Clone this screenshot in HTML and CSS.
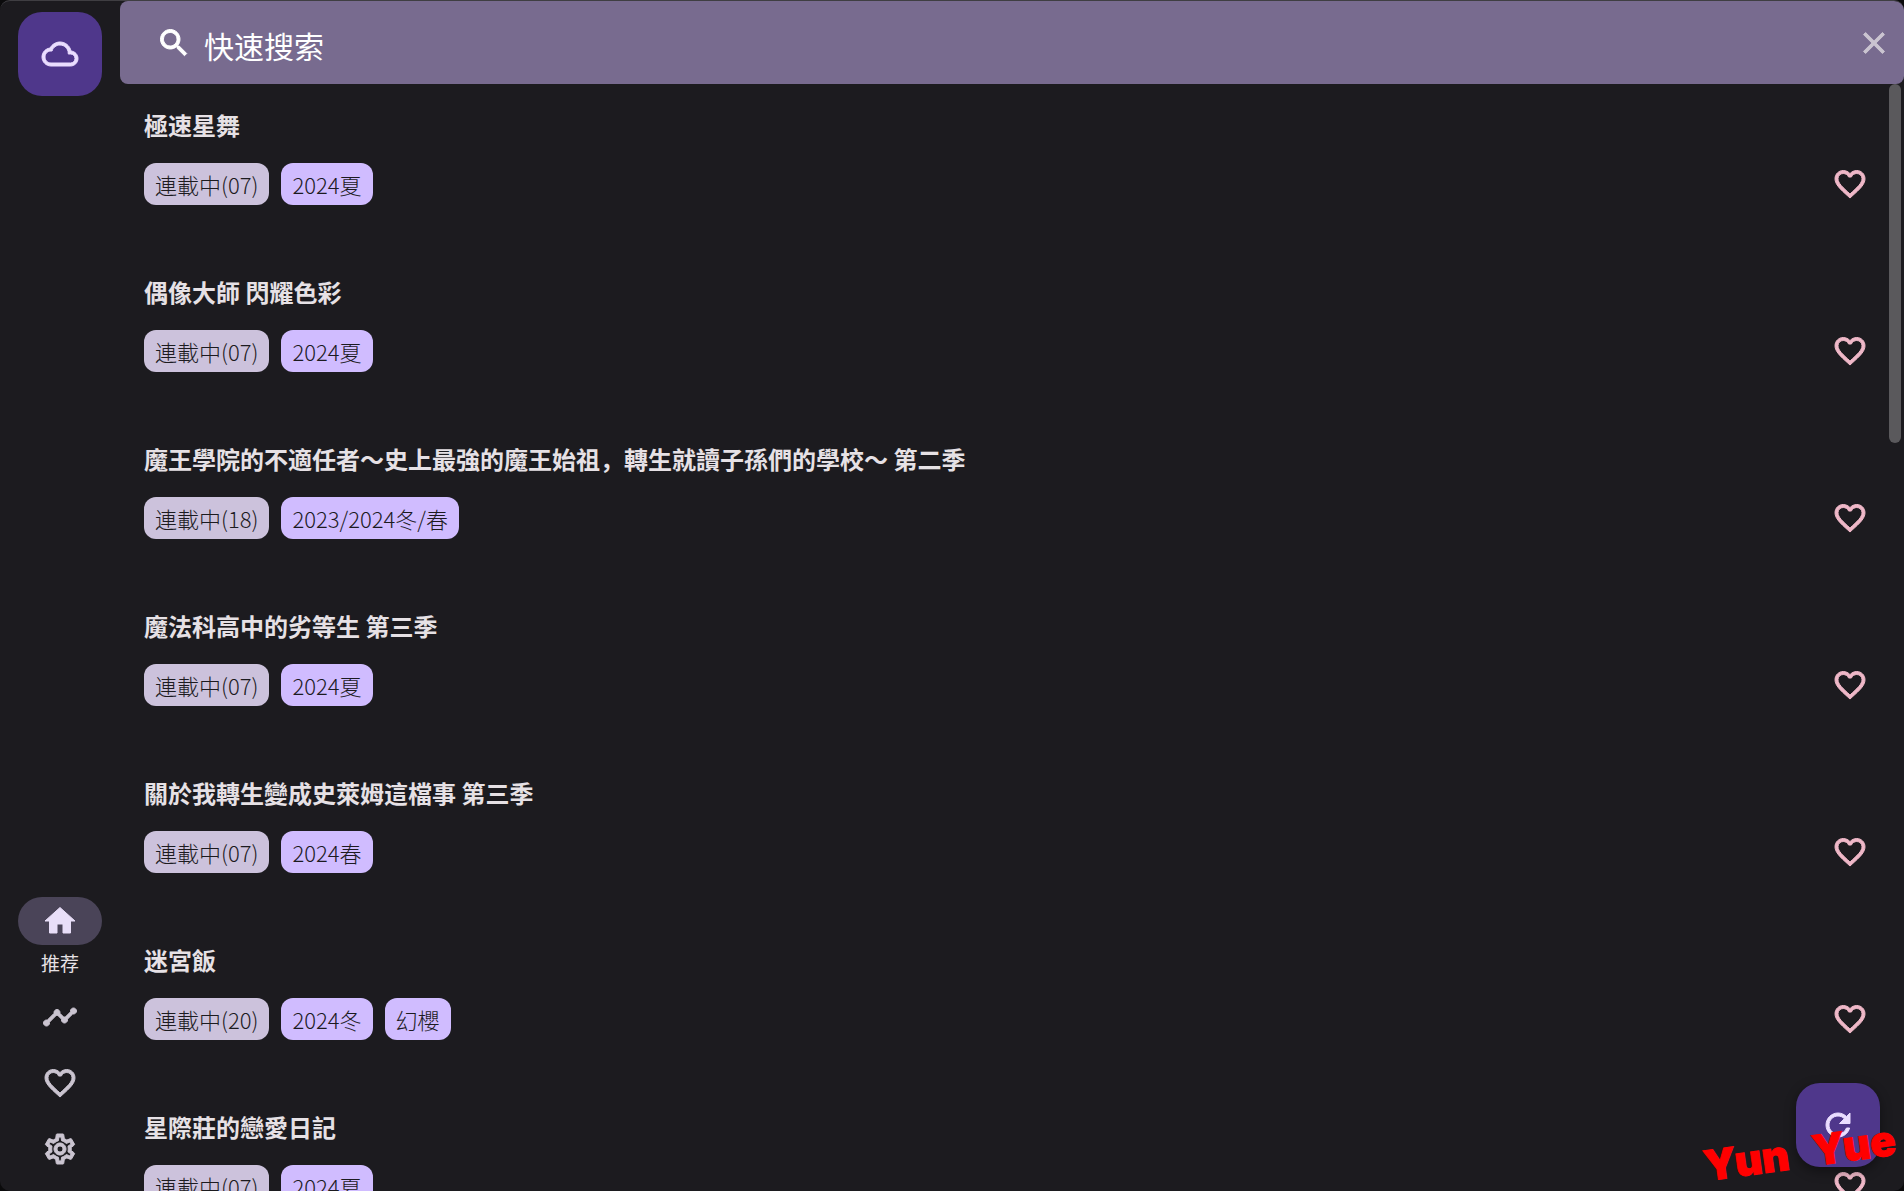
FILE: index.html
```html
<!DOCTYPE html>
<html lang="zh-CN">
<head>
  <meta charset="UTF-8">
  <meta name="viewport" content="width=device-width, initial-scale=1.0">
  <title>Yun Yue</title>
  <link rel="stylesheet" href="styles.css">
</head>
<body>
  <!-- shared icons -->
  <svg class="sprite" aria-hidden="true">
    <symbol id="heart" viewBox="0 0 24 24"><path d="M16.5 3c-1.74 0-3.41.81-4.5 2.09C10.91 3.81 9.24 3 7.5 3 4.42 3 2 5.42 2 8.5c0 3.78 3.4 6.86 8.55 11.54L12 21.35l1.45-1.32C18.6 15.36 22 12.28 22 8.5 22 5.42 19.58 3 16.5 3zm-4.4 15.55l-.1.1-.1-.1C7.14 14.24 4 11.39 4 8.5 4 6.5 5.5 5 7.5 5c1.54 0 3.04.99 3.57 2.36h1.87C13.46 5.99 14.96 5 16.5 5c2 0 3.5 1.5 3.5 3.5 0 2.89-3.14 5.74-7.9 10.05z"/></symbol>
  </svg>

  <div class="app">
    <aside class="rail">
      <button class="fab" aria-label="雲端">
        <svg class="icon" viewBox="0 0 24 24"><path d="M19.35 10.04C18.67 6.59 15.64 4 12 4 9.11 4 6.6 5.64 5.35 8.04 2.34 8.36 0 10.91 0 14c0 3.31 2.69 6 6 6h13c2.76 0 5-2.24 5-5 0-2.64-2.05-4.78-4.65-4.96zM19 18H6c-2.21 0-4-1.79-4-4s1.79-4 4-4h.71C7.37 7.69 9.48 6 12 6c3.04 0 5.5 2.46 5.5 5.5v.5H19c1.66 0 3 1.34 3 3s-1.34 3-3 3z"/></svg>
      </button>
      <nav class="nav">
        <a class="nav-item active" href="#">
          <span class="pill"><svg class="icon" viewBox="0 0 24 24"><path d="M10 20v-6h4v6h5v-8h3L12 3 2 12h3v8z"/></svg></span>
          <span class="nav-label">推荐</span>
        </a>
        <a class="nav-item" href="#" aria-label="趨勢">
          <svg class="icon" viewBox="0 0 24 24"><path d="M23 8c0 1.1-.9 2-2 2-.18 0-.35-.02-.51-.07l-3.56 3.55c.05.16.07.34.07.52 0 1.1-.9 2-2 2s-2-.9-2-2c0-.18.02-.36.07-.52l-2.55-2.55c-.16.05-.34.07-.52.07s-.36-.02-.52-.07l-4.55 4.56c.05.16.07.33.07.51 0 1.1-.9 2-2 2s-2-.9-2-2 .9-2 2-2c.18 0 .35.02.51.07l4.56-4.55C8.02 9.36 8 9.18 8 9c0-1.1.9-2 2-2s2 .9 2 2c0 .18-.02.36-.07.52l2.55 2.55c.16-.05.34-.07.52-.07s.36.02.52.07l3.55-3.56C19.02 8.35 19 8.18 19 8c0-1.1.9-2 2-2s2 .9 2 2z"/></svg>
        </a>
        <a class="nav-item" href="#" aria-label="收藏">
          <svg class="icon"><use href="#heart"/></svg>
        </a>
        <a class="nav-item" href="#" aria-label="設定">
          <svg class="icon" viewBox="0 0 24 24"><path d="M19.43 12.98c.04-.32.07-.64.07-.98s-.03-.66-.07-.98l2.11-1.65c.19-.15.24-.42.12-.64l-2-3.46c-.09-.16-.26-.25-.44-.25-.06 0-.12.01-.17.03l-2.49 1c-.52-.4-1.08-.73-1.69-.98l-.38-2.65C14.46 2.18 14.25 2 14 2h-4c-.25 0-.46.18-.49.42l-.38 2.65c-.61.25-1.17.59-1.69.98l-2.49-1c-.06-.02-.12-.03-.18-.03-.17 0-.34.09-.43.25l-2 3.46c-.13.22-.07.49.12.64l2.11 1.65c-.04.32-.07.65-.07.98s.03.66.07.98l-2.11 1.65c-.19.15-.24.42-.12.64l2 3.46c.09.16.26.25.44.25.06 0 .12-.01.17-.03l2.49-1c.52.4 1.08.73 1.69.98l.38 2.65c.03.24.24.42.49.42h4c.25 0 .46-.18.49-.42l.38-2.65c.61-.25 1.17-.59 1.69-.98l2.49 1c.06.02.12.03.18.03.17 0 .34-.09.43-.25l2-3.46c.12-.22.07-.49-.12-.64l-2.11-1.65zm-1.98-1.71c.04.31.05.52.05.73 0 .21-.02.43-.05.73l-.14 1.13.89.7 1.08.84-.7 1.21-1.27-.51-1.04-.42-.9.68c-.43.32-.84.56-1.25.73l-1.06.43-.16 1.13-.2 1.35h-1.4l-.19-1.35-.16-1.13-1.06-.43c-.43-.18-.83-.41-1.23-.71l-.91-.7-1.06.43-1.27.51-.7-1.21 1.08-.84.89-.7-.14-1.13c-.03-.31-.05-.54-.05-.74s.02-.43.05-.73l.14-1.13-.89-.7-1.08-.84.7-1.21 1.27.51 1.04.42.9-.68c.43-.32.84-.56 1.25-.73l1.06-.43.16-1.13.2-1.35h1.39l.19 1.35.16 1.13 1.06.43c.43.18.83.41 1.23.71l.91.7 1.06-.43 1.27-.51.7 1.21-1.07.85-.89.7.14 1.13zM12 8c-2.21 0-4 1.79-4 4s1.79 4 4 4 4-1.79 4-4-1.79-4-4-4zm0 6c-1.1 0-2-.9-2-2s.9-2 2-2 2 .9 2 2-.9 2-2 2z"/></svg>
        </a>
      </nav>
    </aside>

    <main class="main">
      <form class="search" role="search">
        <svg class="icon" viewBox="0 0 24 24"><path d="M15.5 14h-.79l-.28-.27C15.41 12.59 16 11.11 16 9.5 16 5.91 13.09 3 9.5 3S3 5.91 3 9.5 5.91 16 9.5 16c1.61 0 3.09-.59 4.23-1.57l.27.28v.79l5 4.99L20.49 19l-4.99-5zm-6 0C7.01 14 5 11.99 5 9.5S7.01 5 9.5 5 14 7.01 14 9.5 11.99 14 9.5 14z"/></svg>
        <input class="search-input" type="text" placeholder="快速搜索" aria-label="快速搜索">
        <button class="icon-btn close" type="button" aria-label="關閉">
          <svg class="icon" viewBox="0 0 24 24"><path d="M19 6.41L17.59 5 12 10.59 6.41 5 5 6.41 10.59 12 5 17.59 6.41 19 12 13.41 17.59 19 19 17.59 13.41 12z"/></svg>
        </button>
      </form>

      <div class="content">
        <ul class="list">
          <li class="item">
            <h2 class="title">極速星舞</h2>
            <div class="row">
              <span class="tag status">連載中(07)</span>
              <span class="tag">2024夏</span>
              <button class="icon-btn like" aria-label="收藏"><svg class="icon"><use href="#heart"/></svg></button>
            </div>
          </li>
          <li class="item">
            <h2 class="title">偶像大師 閃耀色彩</h2>
            <div class="row">
              <span class="tag status">連載中(07)</span>
              <span class="tag">2024夏</span>
              <button class="icon-btn like" aria-label="收藏"><svg class="icon"><use href="#heart"/></svg></button>
            </div>
          </li>
          <li class="item">
            <h2 class="title">魔王學院的不適任者～史上最強的魔王始祖，轉生就讀子孫們的學校～ 第二季</h2>
            <div class="row">
              <span class="tag status">連載中(18)</span>
              <span class="tag">2023/2024冬/春</span>
              <button class="icon-btn like" aria-label="收藏"><svg class="icon"><use href="#heart"/></svg></button>
            </div>
          </li>
          <li class="item">
            <h2 class="title">魔法科高中的劣等生 第三季</h2>
            <div class="row">
              <span class="tag status">連載中(07)</span>
              <span class="tag">2024夏</span>
              <button class="icon-btn like" aria-label="收藏"><svg class="icon"><use href="#heart"/></svg></button>
            </div>
          </li>
          <li class="item">
            <h2 class="title">關於我轉生變成史萊姆這檔事 第三季</h2>
            <div class="row">
              <span class="tag status">連載中(07)</span>
              <span class="tag">2024春</span>
              <button class="icon-btn like" aria-label="收藏"><svg class="icon"><use href="#heart"/></svg></button>
            </div>
          </li>
          <li class="item">
            <h2 class="title">迷宮飯</h2>
            <div class="row">
              <span class="tag status">連載中(20)</span>
              <span class="tag">2024冬</span>
              <span class="tag">幻櫻</span>
              <button class="icon-btn like" aria-label="收藏"><svg class="icon"><use href="#heart"/></svg></button>
            </div>
          </li>
          <li class="item">
            <h2 class="title">星際莊的戀愛日記</h2>
            <div class="row">
              <span class="tag status">連載中(07)</span>
              <span class="tag">2024夏</span>
              <button class="icon-btn like" aria-label="收藏"><svg class="icon"><use href="#heart"/></svg></button>
            </div>
          </li>
        </ul>
        <div class="scroll-thumb"></div>
      </div>

      <button class="fab refresh" aria-label="重新整理">
        <svg class="icon" viewBox="0 0 24 24"><path d="M17.65 6.35C16.2 4.9 14.21 4 12 4c-4.42 0-7.99 3.58-7.99 8s3.57 8 7.99 8c3.73 0 6.84-2.55 7.73-6h-2.08c-.82 2.33-3.04 4-5.65 4-3.31 0-6-2.69-6-6s2.69-6 6-6c1.66 0 3.14.69 4.22 1.78L13 11h7V4l-2.35 2.35z"/></svg>
      </button>
    </main>

    <div class="watermark"><span>Yun</span> <span>Yue</span></div>
  </div>
</body>
</html>
```
FILE: styles.css
```css
* {
  box-sizing: border-box;
}

body {
  margin: 0;
  background: #0b0b0c;
  color: #e6e1e5;
  font-family: "Noto Sans CJK SC", sans-serif;
}

button {
  padding: 0;
  border: none;
  background: none;
  cursor: pointer;
}

.sprite {
  display: none;
}

.icon {
  display: block;
  width: 36px;
  height: 36px;
  fill: currentColor;
  stroke: currentColor;
  stroke-width: 1px;
  overflow: visible;
  flex-shrink: 0;
}

path {
  vector-effect: non-scaling-stroke;
}

.app {
  position: relative;
  display: flex;
  height: 100vh;
  overflow: hidden;
  background: #1c1b1f;
  border-top: 1px solid #3f3e42;
  border-radius: 10px;
}

/* side rail */
.rail {
  width: 120px;
  flex-shrink: 0;
  display: flex;
  flex-direction: column;
  align-items: center;
  justify-content: space-between;
  padding: 11px 0 24px;
}

.fab {
  display: flex;
  align-items: center;
  justify-content: center;
  width: 84px;
  height: 84px;
  border-radius: 24px;
  background: #4f378b;
  color: #eaddff;
}

.nav {
  display: flex;
  flex-direction: column;
  align-items: center;
  gap: 30px;
}

.nav-item {
  color: #cac4d0;
  text-decoration: none;
}

.nav-item.active {
  color: #e6e1e5;
  margin-bottom: -6px;
}

.pill {
  display: flex;
  align-items: center;
  justify-content: center;
  width: 84px;
  height: 48px;
  border-radius: 24px;
  background: #4a4458;
  color: #e8def8;
}

.nav-label {
  display: block;
  margin-top: 6px;
  font-size: 19px;
  line-height: 24px;
  text-align: center;
}

/* main column */
.main {
  flex: 1;
  min-width: 0;
  display: flex;
  flex-direction: column;
}

.search {
  display: flex;
  align-items: center;
  height: 83px;
  flex-shrink: 0;
  padding: 0 12px 0 36px;
  background: #786b8f;
  border-radius: 8px;
  color: #fff;
}

.search-input {
  flex: 1;
  min-width: 0;
  height: 83px;
  padding: 4px 12px 0;
  border: none;
  outline: none;
  background: none;
  color: #fff;
  font-family: inherit;
  font-size: 30px;
}

.search-input::placeholder {
  color: #fff;
  opacity: 1;
}

.close {
  color: #cac4d0;
}

.content {
  position: relative;
  flex: 1;
  min-height: 0;
  overflow: hidden;
}

.list {
  margin: 0;
  padding: 23px 36px 0 24px;
  list-style: none;
}

.item {
  padding-bottom: 69px;
}

.title {
  margin: 0 0 20px;
  font-size: 24px;
  line-height: 36px;
  font-weight: 700;
}

.row {
  display: flex;
  align-items: center;
  gap: 12px;
  height: 42px;
}

.tag {
  height: 42px;
  padding: 0 11px;
  border-radius: 12px;
  background: #d0bcff;
  color: #1c1b1f;
  font-size: 22px;
  line-height: 42px;
  font-weight: 300;
  white-space: nowrap;
}

.tag.status {
  background: #ccc2dc;
}

.like {
  margin-left: auto;
  color: #efb8c8;
}

.scroll-thumb {
  position: absolute;
  top: 0;
  right: 3px;
  width: 12px;
  height: 32.4%;
  border-radius: 6px;
  background: #5a595c;
}

.refresh {
  position: absolute;
  right: 24px;
  bottom: 24px;
  box-shadow: 0 4px 12px rgba(0, 0, 0, 0.4);
}

.watermark {
  position: absolute;
  right: 8px;
  bottom: 16px;
  display: flex;
  gap: 24px;
  color: #f00;
  font-family: Inter, sans-serif;
  font-size: 42px;
  line-height: 44px;
  font-weight: 900;
  -webkit-text-stroke: 1px #f00;
  transform: rotate(-8deg);
  pointer-events: none;
}
```
